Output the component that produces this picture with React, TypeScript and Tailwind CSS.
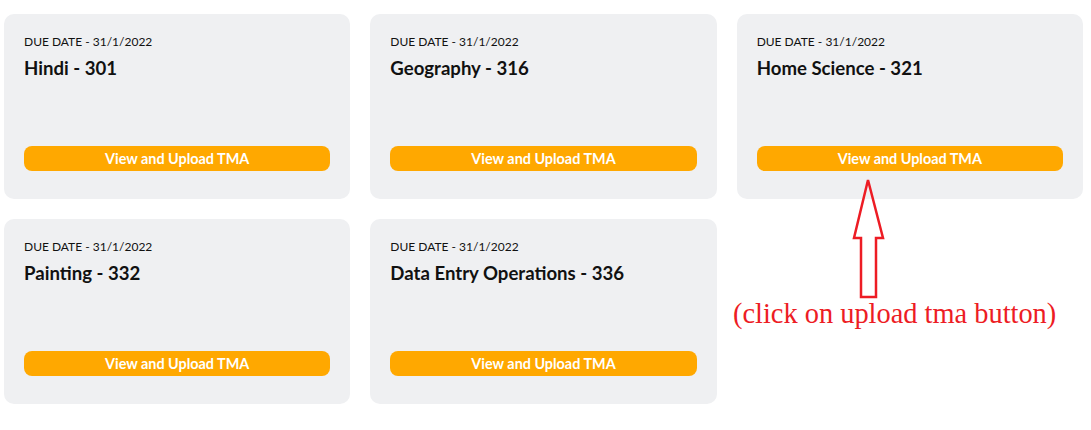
const subjects = [
  "Hindi - 301",
  "Geography - 316",
  "Home Science - 321",
  "Painting - 332",
  "Data Entry Operations - 336",
];

function TmaCard({ title }: { title: string }) {
  return (
    <div className="flex h-[185px] flex-col rounded-[10px] bg-[#eff0f2] px-5 pb-[28px] pt-5">
      <p className="text-[12px] leading-4 text-[#111]">DUE DATE - 31/1/2022</p>
      <h3 className="mt-[6px] text-[18.6px] font-bold leading-6 text-[#111]">{title}</h3>
      <button className="mt-auto h-[25px] w-full rounded-lg bg-[#ffa800] text-[14.4px] font-bold leading-[25px] text-white">
        View and Upload TMA
      </button>
    </div>
  );
}

function Annotation() {
  return (
    <div className="pointer-events-none absolute left-[730px] top-[176px] flex flex-col items-start">
      <svg width="340" height="124" viewBox="0 0 340 124" className="block">
        <path
          d="M138 4 L153 62 L146 62 L146 121 L131 121 L131 62 L124 62 Z"
          fill="none"
          stroke="#ed1c24"
          strokeWidth="2.5"
          strokeLinejoin="miter"
        />
      </svg>
      <p
        className="-mt-[2px] ml-[3px] whitespace-nowrap text-[28.4px] leading-8 text-[#ed1c24]"
        style={{ fontFamily: "'Liberation Serif', serif" }}
      >
        (click on upload tma button)
      </p>
    </div>
  );
}

export default function App() {
  return (
    <div
      className="relative h-[430px] w-[1091px] bg-white pl-1 pt-[14px]"
      style={{ fontFamily: "Lato, 'Noto Sans', sans-serif" }}
    >
      <div className="grid w-[1079px] grid-cols-3 gap-x-5 gap-y-5">
        {subjects.map((s) => (
          <TmaCard key={s} title={s} />
        ))}
      </div>
      <Annotation />
    </div>
  );
}
